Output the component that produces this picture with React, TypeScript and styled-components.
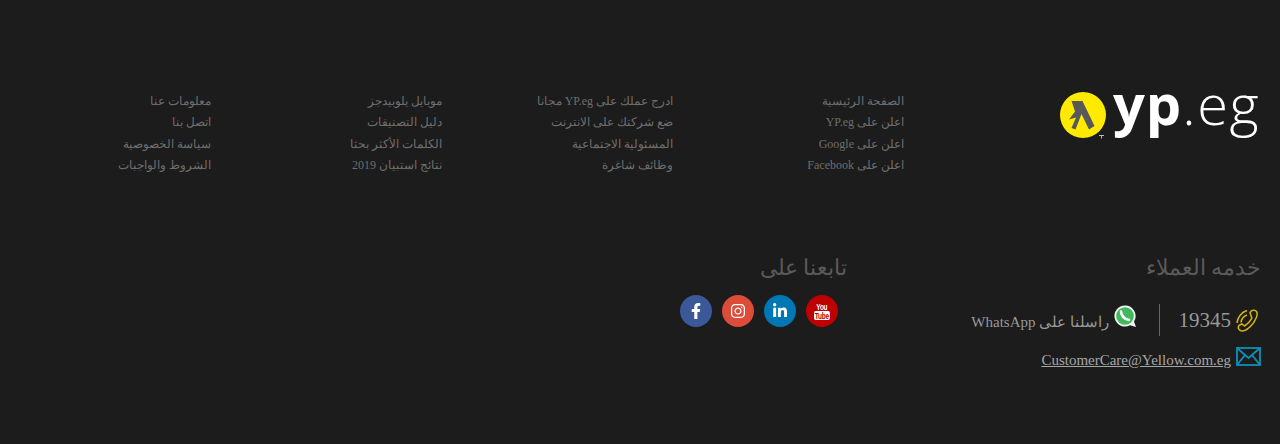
import React from 'react';
import styled, { createGlobalStyle } from 'styled-components';
import { FaFacebookF, FaInstagram, FaLinkedinIn } from 'react-icons/fa';

const GlobalStyle = createGlobalStyle`
  html, body {
    margin: 0;
    padding: 0;
    background: #1c1c1c;
  }
`;

const Footer = styled.footer`
  direction: rtl;
  width: 1280px;
  height: 444px;
  box-sizing: border-box;
  padding: 80px 19px 0 0;
  background: #1c1c1c;
  font-family: 'Liberation Serif', serif;
  overflow: hidden;
`;

const TopRow = styled.div`
  display: flex;
  height: 172px;
`;

const LogoBox = styled.a`
  direction: ltr;
  width: 357px;
  flex: none;
  display: flex;
  justify-content: flex-end;
  align-items: flex-start;
`;

const Brand = styled.div`
  display: flex;
  align-items: flex-start;
  gap: 7px;
  height: 60px;
  width: 201px;
`;

const BrandMark = styled.svg`
  width: 46px;
  height: 50px;
  margin-top: 12px;
  flex: none;
`;

const BrandText = styled.div`
  font-family: 'Open Sans', sans-serif;
  font-size: 56px;
  line-height: 60px;
  margin-top: -7px;
  color: #fff;
  white-space: nowrap;
`;

const BrandBold = styled.span`
  font-weight: 700;
  letter-spacing: 1px;
`;

const BrandLight = styled.span`
  font-weight: 300;
  letter-spacing: 1.5px;
`;

const LinkColumn = styled.ul`
  width: 231px;
  flex: none;
  margin: 0;
  padding: 10.5px 0 0;
  list-style: none;
`;

const LinkItem = styled.li`
  font-size: 12px;
  line-height: 21.5px;
  color: #6e6e6e;
  white-space: nowrap;
`;

const BottomRow = styled.div`
  display: flex;
`;

const ContactBlock = styled.div`
  width: 414px;
  flex: none;
`;

const Heading = styled.h3`
  margin: 0;
  font-size: 21.5px;
  line-height: 32px;
  font-weight: 400;
  color: #5a5a5a;
`;

const ContactRow = styled.div`
  display: flex;
  align-items: center;
  margin-top: 20px;
  height: 32px;
`;

const PhoneNumber = styled.div`
  display: flex;
  align-items: center;
  gap: 5px;
  padding-right: 3px;
  width: 98px;
  height: 32px;
  color: #999;
  font-size: 21px;
  border-left: 1px solid #666;
`;

const PhoneDigits = styled.span`
  padding-top: 1px;
`;

const WhatsApp = styled.div`
  display: flex;
  align-items: center;
  gap: 5px;
  padding-right: 22px;
  color: #999;
  font-size: 15px;
`;

const WhatsAppIcon = styled.svg`
  width: 23px;
  height: 23px;
  margin-bottom: 7px;
`;

const WhatsAppText = styled.span`
  padding-top: 4px;
`;

const EmailRow = styled.div`
  display: flex;
  align-items: flex-start;
  gap: 5px;
  margin-top: 11px;
`;

const EmailIcon = styled.svg`
  width: 25px;
  height: 19px;
`;

const EmailLink = styled.a`
  color: #a6a6a6;
  font-size: 15px;
  padding-top: 5px;
  text-decoration: underline;
`;

const FollowBlock = styled.div`
  flex: none;
`;

const SocialRow = styled.div`
  display: flex;
  gap: 10px;
  margin-top: 11px;
  padding-right: 9px;
`;

const SocialButton = styled.a<{ $bg: string }>`
  width: 32px;
  height: 32px;
  border-radius: 50%;
  background: ${(p) => p.$bg};
  color: #fff;
  display: flex;
  align-items: center;
  justify-content: center;
  font-size: 16px;
`;

const TubeMark = styled.div`
  direction: ltr;
  display: flex;
  flex-direction: column;
  align-items: center;
  font-family: 'Liberation Sans', sans-serif;
  font-size: 9px;
  line-height: 8px;
  font-weight: 700;
  color: #fff;
  letter-spacing: -0.3px;
  transform: scaleX(0.72);
`;

const TubeBox = styled.span`
  background: #fff;
  color: #bd0000;
  border-radius: 2px;
  padding: 1px 1px 0;
`;

const linkColumns = [
  ['الصفحة الرئيسية', 'اعلن على YP.eg', 'اعلن على Google', 'اعلن على Facebook'],
  ['ادرج عملك على YP.eg مجانا', 'ضع شركتك على الانترنت', 'المسئولية الاجتماعية', 'وظائف شاغرة'],
  ['موبايل يلوبيدجز', 'دليل التصنيفات', 'الكلمات الأكثر بحثا', 'نتائج استبيان 2019'],
  ['معلومات عنا', 'اتصل بنا', 'سياسة الخصوصية', 'الشروط والواجبات'],
];

const App: React.FC = () => {
  return (
    <>
      <GlobalStyle />
      <Footer>
        <TopRow>
          <LogoBox>
            <Brand>
              <BrandMark viewBox="0 0 46 50">
                <circle cx="23" cy="23" r="23" fill="#ffea00" />
                <path d="M11.500 9 L22.500 9 L34.500 34 L29 37.500 L21.500 22 L15.500 37.500 L11.500 36 L16 25.500 L9 27.500 L15 19.500 Z" fill="#58585a" />
                <path d="M39 43.500h5M41.500 43.500v3" stroke="#bbb" strokeWidth="1" />
              </BrandMark>
              <BrandText>
                <BrandBold>yp</BrandBold>
                <BrandLight>.eg</BrandLight>
              </BrandText>
            </Brand>
          </LogoBox>
          {linkColumns.map((col, i) => (
            <LinkColumn key={i}>
              {col.map((t) => (
                <LinkItem key={t}>{t}</LinkItem>
              ))}
            </LinkColumn>
          ))}
        </TopRow>
        <BottomRow>
          <ContactBlock>
            <Heading>خدمه العملاء</Heading>
            <ContactRow>
              <PhoneNumber>
                <svg width="22" height="23" viewBox="0 0 22 23" fill="none" stroke="#d6b40a" strokeWidth="1.500" strokeLinejoin="round">
                  <path d="M14 3.500C15.500 1 19 .5 20.500 2.500 22 5 20.500 9.500 17 14.500 13 19.500 8.500 22.500 5 21.800 2.500 21 1.500 18.500 3 16.500L5.800 14.800 8.500 17C11 15.500 14 12.500 15.800 9.300Z" />
                  <path d="M1 14C1.500 8.500 5.500 3 11 1.500M5 13.500C5.500 10 8 7 11 6" />
                </svg>
                <PhoneDigits>19345</PhoneDigits>
              </PhoneNumber>
              <WhatsApp>
                <WhatsAppIcon viewBox="0 0 23 23">
                  <path d="M11 .5a10.500 10.500 0 1 0 5 19.700L22 22l-2-5.500A10.500 10.500 0 0 0 11 .5z" fill="#f2f2f2" />
                  <circle cx="11" cy="11" r="8.800" fill="#3fb95a" />
                  <path d="M7 6.500c.5 4.500 3.500 7.500 8 8.500" stroke="#fff" strokeWidth="2.600" fill="none" strokeLinecap="round" />
                </WhatsAppIcon>
                <WhatsAppText>راسلنا على WhatsApp</WhatsAppText>
              </WhatsApp>
            </ContactRow>
            <EmailRow>
              <EmailIcon viewBox="0 0 25 19" fill="none" stroke="#0f8fb8" strokeWidth="1.800">
                <rect x="1" y="1" width="23" height="17" />
                <path d="M1 1l11.500 10L24 1M1 18l8-10M24 18l-8-10" />
              </EmailIcon>
              <EmailLink>CustomerCare@Yellow.com.eg</EmailLink>
            </EmailRow>
          </ContactBlock>
          <FollowBlock>
            <Heading>تابعنا على</Heading>
            <SocialRow>
              <SocialButton $bg="#bd0000">
                <TubeMark>
                  <span>You</span>
                  <TubeBox>Tube</TubeBox>
                </TubeMark>
              </SocialButton>
              <SocialButton $bg="#0077b5"><FaLinkedinIn /></SocialButton>
              <SocialButton $bg="#dd4b39"><FaInstagram /></SocialButton>
              <SocialButton $bg="#3b5998"><FaFacebookF /></SocialButton>
            </SocialRow>
          </FollowBlock>
        </BottomRow>
      </Footer>
    </>
  );
};

export default App;
